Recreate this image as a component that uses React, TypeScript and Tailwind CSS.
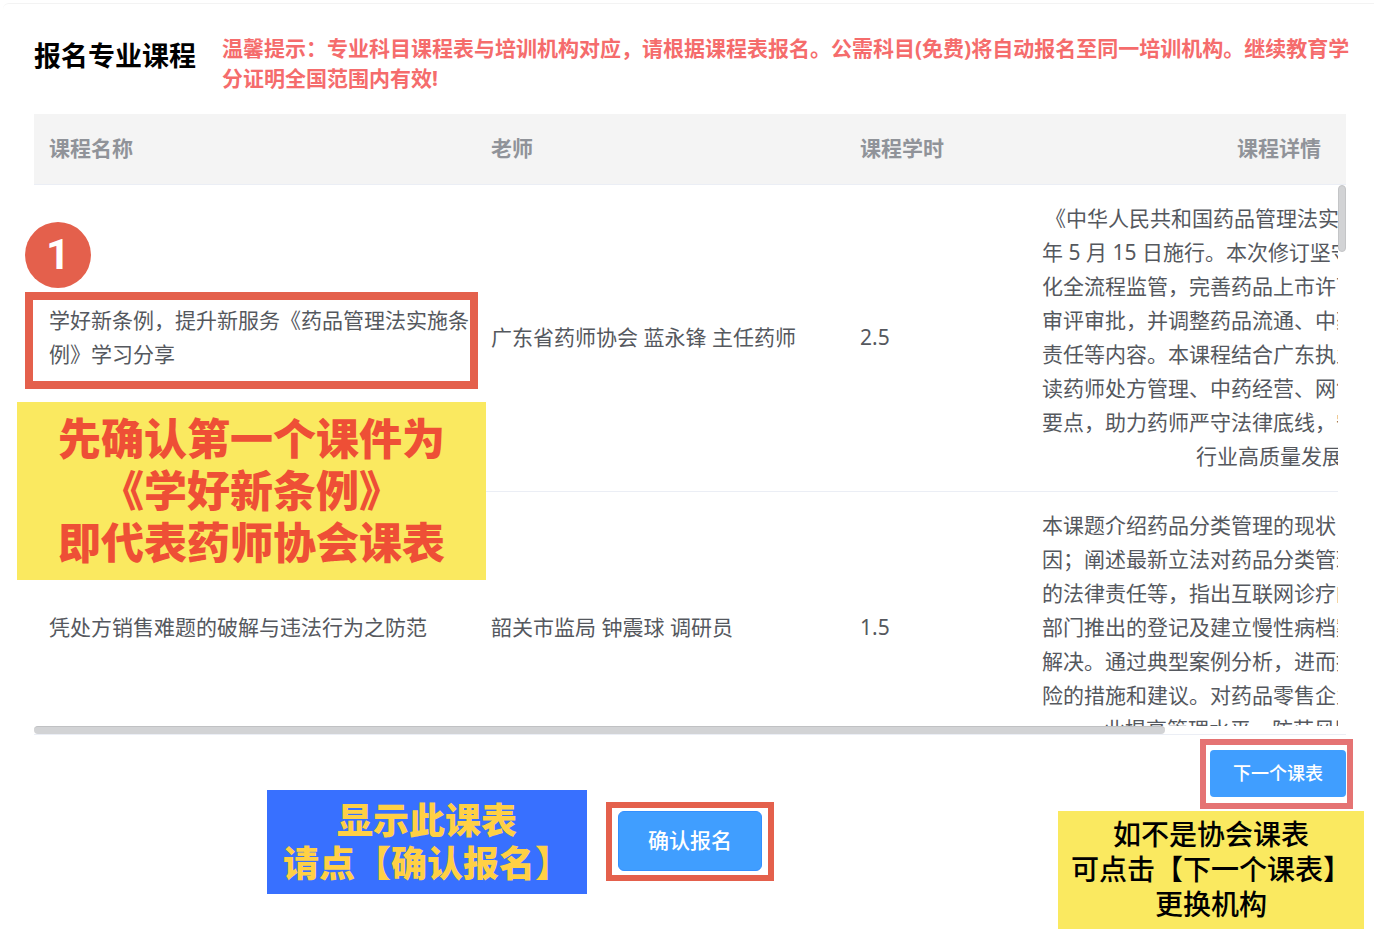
import type { ReactNode } from "react";

type Course = {
  name: string;
  teacher: string;
  hours: string;
  details: { text: string; indent?: string }[];
};

const courses: Course[] = [
  {
    name: "学好新条例，提升新服务《药品管理法实施条例》学习分享",
    teacher: "广东省药师协会 蓝永锋 主任药师",
    hours: "2.5",
    details: [
      { text: "《中华人民共和国药品管理法实施", indent: "pl-[3px]" },
      { text: "年 5 月 15 日施行。本次修订坚守" },
      { text: "化全流程监管，完善药品上市许可" },
      { text: "审评审批，并调整药品流通、中药" },
      { text: "责任等内容。本课程结合广东执业" },
      { text: "读药师处方管理、中药经营、网售" },
      { text: "要点，助力药师严守法律底线，守" },
      { text: "行业高质量发展", indent: "pl-[154px]" },
    ],
  },
  {
    name: "凭处方销售难题的破解与违法行为之防范",
    teacher: "韶关市监局 钟震球 调研员",
    hours: "1.5",
    details: [
      { text: "本课题介绍药品分类管理的现状，" },
      { text: "因；阐述最新立法对药品分类管理" },
      { text: "的法律责任等，指出互联网诊疗的" },
      { text: "部门推出的登记及建立慢性病档案" },
      { text: "解决。通过典型案例分析，进而提" },
      { text: "险的措施和建议。对药品零售企业" },
      { text: "业提高管理水平、防范风险", indent: "pl-[62px]" },
    ],
  },
];

function Columns() {
  return (
    <colgroup>
      <col className="w-[442px]" />
      <col className="w-[369px]" />
      <col className="w-[182px]" />
      <col />
    </colgroup>
  );
}

function HeaderCell({ id, right, children }: { id: string; right?: boolean; children: ReactNode }) {
  return (
    <th
      id={id}
      scope="col"
      className={`p-0 font-bold ${right ? "pr-[25px] text-right" : "pl-[15px] text-left"}`}
    >
      {children}
    </th>
  );
}

function CourseRow({ course }: { course: Course }) {
  return (
    <tr className="border-b border-[#ebeef5]">
      <td headers="col-name" className="pt-4 pb-[18px] pl-[15px]">{course.name}</td>
      <td headers="col-teacher" className="pt-4 pb-[18px] pl-[15px]">{course.teacher}</td>
      <td headers="col-hours" className="pt-4 pb-[18px] pl-[15px]">{course.hours}</td>
      <td headers="col-details" className="pt-4 pb-[18px] pl-[15px]">
        {course.details.map((line) => (
          <p key={line.text} className={`whitespace-nowrap ${line.indent ?? ""}`}>
            {line.text}
          </p>
        ))}
      </td>
    </tr>
  );
}

export default function App() {
  return (
    <main className="mt-[3px] ml-[3px] rounded-tl-md border-t border-[#f3f3f3] bg-white font-['Noto_Sans','Noto_Sans_CJK_SC',sans-serif] text-[21px]">
      <header className="flex items-start gap-[26px] pt-[29px] pr-5 pb-[21px] pl-[31px]">
        <h1 className="shrink-0 text-[27px] leading-[46px] font-bold text-black">报名专业课程</h1>
        <p className="leading-[30px] font-bold text-[#f56c6c]">
          温馨提示：专业科目课程表与培训机构对应，请根据课程表报名。公需科目(免费)将自动报名至同一培训机构。继续教育学分证明全国范围内有效!
        </p>
      </header>

      <section className="relative mr-7 ml-[31px]">
        <table className="w-full table-fixed border-collapse bg-[#f4f4f4] text-[#909399]">
          <Columns />
          <thead>
            <tr className="h-[70px] border-b border-[#ebeef5]">
              <HeaderCell id="col-name">课程名称</HeaderCell>
              <HeaderCell id="col-teacher">老师</HeaderCell>
              <HeaderCell id="col-hours">课程学时</HeaderCell>
              <HeaderCell id="col-details" right>课程详情</HeaderCell>
            </tr>
          </thead>
        </table>

        <div className="relative border-b border-[#ebeef5]">
          <div className="flex">
            <div className="h-[541px] min-w-0 flex-1 overflow-hidden">
              <table className="w-full table-fixed border-collapse leading-[34px] text-[#55585e]">
                <Columns />
                <tbody>
                  {courses.map((course) => (
                    <CourseRow key={course.name} course={course} />
                  ))}
                </tbody>
              </table>
            </div>
            <div className="w-2">
              <div className="h-[67px] rounded-full border border-[#c4c5c7] bg-[#d2d3d5]" />
            </div>
          </div>
          <div className="h-2 w-[1131px] rounded-full border-t border-[#c0c1c3] bg-[#d2d3d5]" />

          <div className="absolute top-[37px] left-[-9px] flex size-[66px] items-center justify-center rounded-full bg-[#e4604c] font-[Roboto,sans-serif] text-[42px] leading-none font-bold text-white">
            1
          </div>
          <div className="pointer-events-none absolute top-[107px] left-[-9px] h-[97px] w-[453px] border-8 border-[#e4604c]" />
          <p className="absolute top-[217px] left-[-17px] flex h-[178px] w-[469px] flex-col justify-center bg-[#fae960] text-center text-[43px] leading-[52px] font-black text-[#ee4f36]">
            <span>先确认第一个课件为</span>
            <span>《学好新条例》</span>
            <span>即代表药师协会课表</span>
          </p>
        </div>
      </section>

      <footer className="flex items-start justify-between pr-[10px] pl-[264px]">
        <div className="flex items-center gap-[19px] pt-[55px]">
          <p className="flex h-[104px] w-80 flex-col justify-center bg-[#3870ff] text-center text-[36px] leading-[43px] font-black text-[#ffd045]">
            <span>显示此课表</span>
            <span>请点【确认报名】</span>
          </p>
          <div className="border-6 border-[#e4604c] px-[6px] pt-[3px] pb-1">
            <button
              type="button"
              className="block h-[60px] w-36 rounded-md border border-[#338fff] bg-[#409eff] font-medium text-white"
            >
              确认报名
            </button>
          </div>
        </div>

        <div className="flex flex-col items-end gap-[2px] pt-1">
          <div className="mr-[11px] border-6 border-[#e57373] pt-[5px] pr-px pb-[6px] pl-1">
            <button type="button" className="block h-[47px] w-[136px] rounded-sm bg-[#409eff] text-[18px] font-medium text-white">
              下一个课表
            </button>
          </div>
          <p className="flex h-[118px] w-[306px] flex-col justify-center bg-[#fae960] text-center text-[28px] leading-[35px] font-medium text-black">
            <span>如不是协会课表</span>
            <span>可点击【下一个课表】</span>
            <span>更换机构</span>
          </p>
        </div>
      </footer>
    </main>
  );
}
